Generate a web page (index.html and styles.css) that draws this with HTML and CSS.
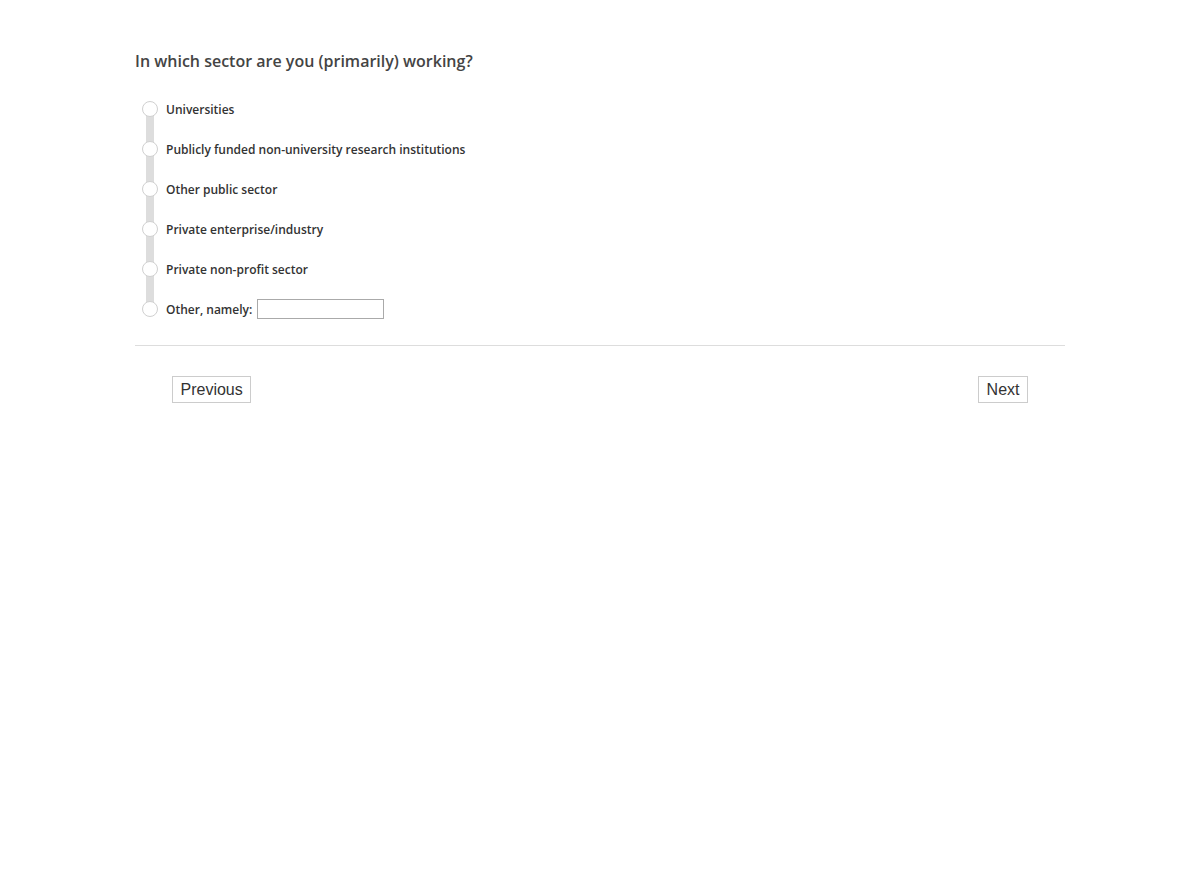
FILE: index.html
```html
<!DOCTYPE html>
<html lang="en">
<head>
<meta charset="UTF-8">
<meta name="viewport" content="width=device-width, initial-scale=1.0">
<title>Survey – Sector</title>
<link rel="stylesheet" href="styles.css">
</head>
<body>
<main class="survey">
  <h2 class="question">In which sector are you (primarily) working?</h2>

  <ul class="options">
    <li class="option"><span class="radio"></span><label>Universities</label></li>
    <li class="option"><span class="radio"></span><label>Publicly funded non-university research institutions</label></li>
    <li class="option"><span class="radio"></span><label>Other public sector</label></li>
    <li class="option"><span class="radio"></span><label>Private enterprise/industry</label></li>
    <li class="option"><span class="radio"></span><label>Private non-profit sector</label></li>
    <li class="option"><span class="radio"></span><label>Other, namely:</label><input type="text" class="other-input"></li>
  </ul>

  <hr class="divider">

  <div class="nav">
    <button class="nav-btn">Previous</button>
    <button class="nav-btn">Next</button>
  </div>
</main>
</body>
</html>
```

FILE: styles.css
```css
*,*::before,*::after{box-sizing:border-box}
body{
  margin:0;
  background:#fff;
  font-family:'Open Sans','Noto Sans',sans-serif;
  color:#333;
}

.survey{
  width:930px;
  margin:0 auto;
  padding-top:50px;
}

/* PREGUNTA */
.question{
  margin:0;
  font-size:16px;
  line-height:22px;
  font-weight:600;
  color:#444;
}

/* OPCIONES */
.options{
  position:relative;
  list-style:none;
  margin:17px 0 0;
  padding:0;
}
.options::before{             /* barra gris que une los círculos */
  content:'';
  position:absolute;
  left:11px;top:20px;bottom:20px;
  width:8px;
  background:#ddd;
}
.option{
  position:relative;
  display:flex;
  align-items:center;
  height:40px;
  padding-left:7px;
  font-size:12px;
  font-weight:600;
  color:#333;
}
.radio{
  width:16px;height:16px;
  margin-right:8px;
  border:1px solid #d0d0d0;
  border-radius:50%;
  background:#fff;
  flex:none;
}
.other-input{
  width:127px;height:20px;
  margin-left:5px;
  border:1px solid #aaa;
  padding:0 3px;
  font:inherit;
}

/* SEPARADOR */
.divider{
  margin:16px 0 0;
  border:0;
  border-top:1px solid #ddd;
}

/* NAVEGACIÓN */
.nav{
  display:flex;
  justify-content:space-between;
  padding:30px 37px 0;
}
.nav-btn{
  padding:4px 7.5px;
  line-height:17px;
  font-family:'Liberation Sans',Arial,sans-serif;
  font-size:16px;
  color:#333;
  background:#fff;
  border:1px solid #ccc;
  border-radius:0;
  cursor:pointer;
}
```
